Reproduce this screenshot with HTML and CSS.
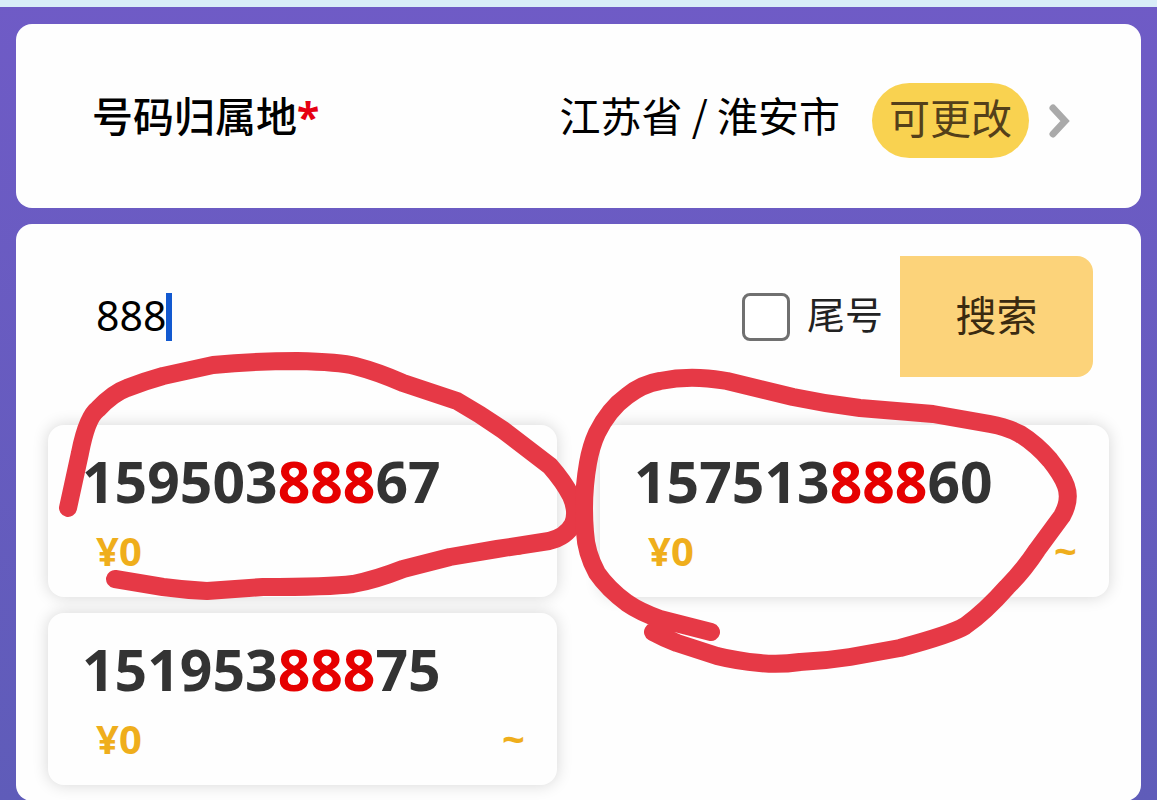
FILE: index.html
```html
<!DOCTYPE html>
<html lang="zh-CN">
<head>
    <meta charset="UTF-8">
    <meta name="viewport" content="width=device-width, initial-scale=1.0">
    <title>选择号码</title>
    <link rel="stylesheet" href="styles.css">
</head>
<body>
    <main class="page">
        <section class="panel region">
            <h2 class="region-title">号码归属地<span class="required">*</span></h2>
            <span class="region-value">江苏省 / 淮安市</span>
            <button type="button" class="change-btn">可更改</button>
            <svg class="arrow" viewBox="0 0 22 34" aria-hidden="true">
                <path d="M4 4 L16 17 L4 30"/>
            </svg>
        </section>

        <section class="panel numbers">
            <form class="search">
                <input type="text" class="search-input" value="888" aria-label="搜索号码">
                <span class="caret"></span>
                <input type="checkbox" id="tail" class="tail-check">
                <label for="tail" class="tail-label">尾号</label>
                <button type="button" class="search-btn">搜索</button>
            </form>

            <div class="number-list">
                <div class="card">
                    <div class="phone">159503<em>888</em>67</div>
                    <div class="price"><span>¥0</span><span>~</span></div>
                </div>
                <div class="card">
                    <div class="phone">157513<em>888</em>60</div>
                    <div class="price"><span>¥0</span><span>~</span></div>
                </div>
                <div class="card">
                    <div class="phone">151953<em>888</em>75</div>
                    <div class="price"><span>¥0</span><span>~</span></div>
                </div>
            </div>
        </section>

        <!-- hand-drawn circles round the two numbers -->
        <svg class="marks" viewBox="0 0 1157 800" aria-hidden="true">
            <path d="M68 508 L80 453 Q87 417 98 409 Q113 393 127 388 Q145 381 163 376 L213 365 Q255 361 297 361 Q340 362 355 366 Q378 372 403 383 Q430 392 457 401 Q480 414 503 430 L550 466 Q564 482 571 496 Q578 512 573 524 Q566 537 549 541 L497 549 L450 557 L403 569 Q375 580 353 584 Q330 587 263 587 L207 591 Q185 590 163 587 L115 579"/>
            <path d="M711 632 L660 619 Q640 612 627 603 Q608 589 597 573 Q586 553 585 532 Q582 497 588 463 Q591 446 597 433 Q609 409 627 396 Q642 384 660 381 Q680 377 700 378 Q716 379 727 381 L793 397 Q826 404 860 408 L933 414 L990 424 Q1007 427 1020 434 Q1036 444 1050 460 Q1062 475 1066 486 Q1071 500 1062 516 L1037 550 Q1024 570 1007 587 Q985 612 965 626 Q952 634 900 648 L850 657 Q825 661 800 662 Q779 665 760 663 Q737 661 717 656 L677 643 Q664 638 653 632"/>
        </svg>
    </main>
</body>
</html>
```

FILE: styles.css
```css
* {
    box-sizing: border-box;
}
body {
    margin: 0;
    min-height: 100vh;
    font-family: "Noto Sans CJK SC", sans-serif;
    font-size: 41px;
    color: #000;
    background: linear-gradient(#6f5bc6, #5f5cb9);
}
.page {
    position: relative;
    display: flex;
    flex-direction: column;
    gap: 16px;
    padding: 17px 16px 0;
    border-top: 7px solid #d9edf8;
}
.panel {
    background-color: #fefefe;
    border-radius: 16px;
}
.region {
    display: flex;
    align-items: center;
    height: 184px;
    padding: 0 70px 4px 76px;
}
.region-title {
    flex: 1;
    margin: 0;
    font-size: 41px;
    font-weight: 500;
}
.required {
    font-family: "Noto Sans", sans-serif;
    font-weight: 700;
    line-height: 1;
    color: #e60012;
}
.change-btn {
    height: 75px;
    margin: 12px 20px 0 32px;
    padding: 0 17px 8px;
    border: none;
    border-radius: 38px;
    background-color: #f9d250;
    color: #54401a;
    font: inherit;
}
.arrow {
    width: 22px;
    height: 34px;
    margin-top: 14px;
    fill: none;
    stroke: #aaa;
    stroke-width: 7;
    stroke-linecap: round;
}
.numbers {
    padding: 32px 32px 16px;
}
.search {
    display: flex;
    align-items: center;
    height: 121px;
    margin: 0 16px 48px 48px;
}
.search-input {
    width: 70px;
    padding: 0 0 4px;
    border: none;
    background: none;
    font: inherit;
    font-family: "Noto Sans", sans-serif;
    outline: none;
}
.caret {
    width: 6px;
    height: 48px;
    background-color: #1259d0;
}
.tail-check {
    appearance: none;
    width: 48px;
    height: 48px;
    margin: 0 17px 0 auto;
    border: 3px solid #707070;
    border-radius: 8px;
    background-color: #fff;
}
.tail-label {
    margin-right: 17px;
    padding-bottom: 8px;
    font-size: 38px;
    color: #222;
}
.search-btn {
    width: 193px;
    height: 121px;
    padding: 0 0 8px;
    border: none;
    border-radius: 0 16px 16px 0;
    background-color: #fcd37a;
    color: #3a2a10;
    font: inherit;
}
.number-list {
    display: grid;
    grid-template-columns: 1fr 1fr;
    gap: 16px 43px;
}
.card {
    height: 172px;
    padding: 20px 32px 0 34px;
    border-radius: 16px;
    background-color: #fefefe;
    box-shadow: 0 0 16px rgba(0, 0, 0, 0.16);
    font-family: "Noto Sans", sans-serif;
    font-weight: 700;
}
.phone {
    font-size: 57px;
    line-height: 72px;
    color: #333;
}
.phone em {
    font-style: normal;
    color: #e60000;
}
.price {
    display: flex;
    justify-content: space-between;
    padding-left: 14px;
    font-size: 40px;
    line-height: 68px;
    color: #efae1c;
}
.marks {
    position: absolute;
    top: -7px;
    left: 0;
    width: 100%;
    fill: none;
    stroke: #e63946;
    stroke-width: 18;
    stroke-linecap: round;
    stroke-linejoin: round;
    pointer-events: none;
}
```
